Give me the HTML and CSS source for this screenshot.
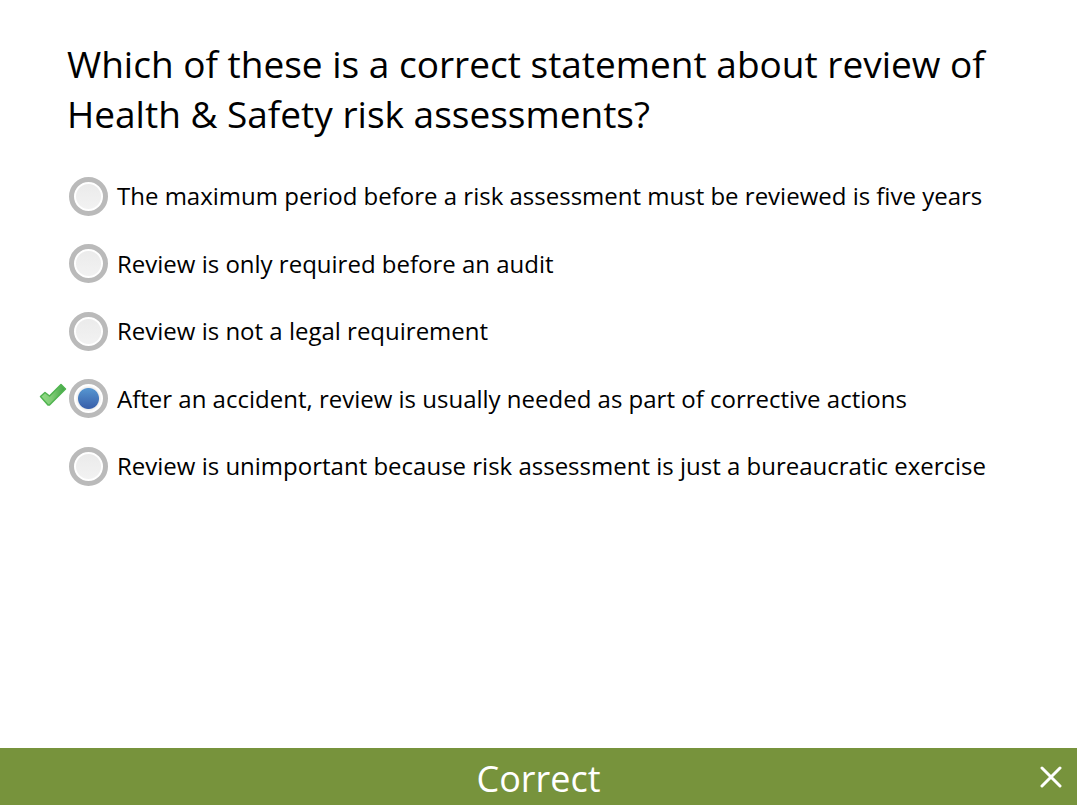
FILE: index.html
```html
<!DOCTYPE html>
<html lang="en">
<head>
<meta charset="utf-8">
<title>Risk assessment quiz</title>
<link rel="stylesheet" href="styles.css">
</head>
<body>
<form class="quiz">
  <main class="question">
    <h1 class="title" id="question-title">Which of these is a correct statement about review of Health &amp; Safety risk assessments?</h1>
    <div class="options" role="radiogroup" aria-labelledby="question-title">
      <label class="option"><input class="radio" type="radio" name="answer"><span>The maximum period before a risk assessment must be reviewed is five years</span></label>
      <label class="option"><input class="radio" type="radio" name="answer"><span>Review is only required before an audit</span></label>
      <label class="option"><input class="radio" type="radio" name="answer"><span>Review is not a legal requirement</span></label>
      <label class="option">
        <svg class="tick" viewBox="0 0 28 24" aria-hidden="true">
          <defs><linearGradient id="tick-fill" x1="0" y1="0" x2="1" y2="0"><stop offset="0" stop-color="#94dc88"/><stop offset=".45" stop-color="#7fcb75"/><stop offset="1" stop-color="#3fa543"/></linearGradient></defs>
          <path d="M1.500 13.500L6 9.500l4.500 3.500L22 1.500l4.500 4.500L10.500 22 9 22z" fill="url(#tick-fill)" stroke="#4fb34f" stroke-width="1.500" stroke-linejoin="round"/>
        </svg>
        <input class="radio" type="radio" name="answer" checked><span>After an accident, review is usually needed as part of corrective actions</span></label>
      <label class="option"><input class="radio" type="radio" name="answer"><span>Review is unimportant because risk assessment is just a bureaucratic exercise</span></label>
    </div>
  </main>
  <footer class="feedback">
    <p class="result">Correct</p>
    <button class="close" type="button" aria-label="Close"><svg class="cross" viewBox="0 0 22 22" aria-hidden="true"><path d="M2 2l18 18M20 2L2 20" stroke="#fff" stroke-width="3" stroke-linecap="round"/></svg></button>
  </footer>
</form>
</body>
</html>
```
FILE: styles.css
```css
* { box-sizing: border-box; }
body {
  margin: 0;
  background: #fff;
  color: #000;
  font-family: "Open Sans", sans-serif;
}
.quiz {
  display: flex;
  flex-direction: column;
  min-height: 100vh;
}
.question {
  flex: 1;
  padding: 39px 67px;
}
.title {
  margin: 0;
  font-size: 37px;
  font-weight: 400;
  line-height: 50px;
}
.options {
  display: grid;
  align-content: space-between;
  min-height: 310px;
  margin-top: 37px;
}
.option {
  position: relative;
  display: flex;
  align-items: center;
  gap: 9px;
  min-height: 40px;
  padding-left: 2px;
  font-size: 24px;
  line-height: 32px;
}
.radio {
  appearance: none;
  flex: none;
  width: 39px;
  height: 39px;
  margin: 0;
  border: 5px solid #bababa;
  border-radius: 50%;
  background: radial-gradient(circle closest-side, transparent 0 12px, #fff 13px), linear-gradient(#e9e9e9, #f4f4f4);
  background-origin: border-box;
}
.radio:checked {
  background: radial-gradient(circle closest-side, transparent 0 10px, #ededed 11px, #fff 13px), linear-gradient(#5594cf 10px, #3a62ac 28px);
  background-origin: border-box;
}
.tick {
  position: absolute;
  left: -28px;
  top: 4px;
  width: 28px;
  height: 24px;
}
.feedback {
  position: relative;
  display: flex;
  align-items: center;
  justify-content: center;
  min-height: 57px;
  background: #77933c;
  color: #fff;
}
.result {
  margin: 0;
  padding-top: 4px;
  font-size: 36px;
  line-height: 50px;
}
.close {
  position: absolute;
  right: 15px;
  top: 18px;
  display: flex;
  padding: 0;
  border: 0;
  background: none;
  cursor: pointer;
}
.cross {
  width: 22px;
  height: 22px;
}
```
